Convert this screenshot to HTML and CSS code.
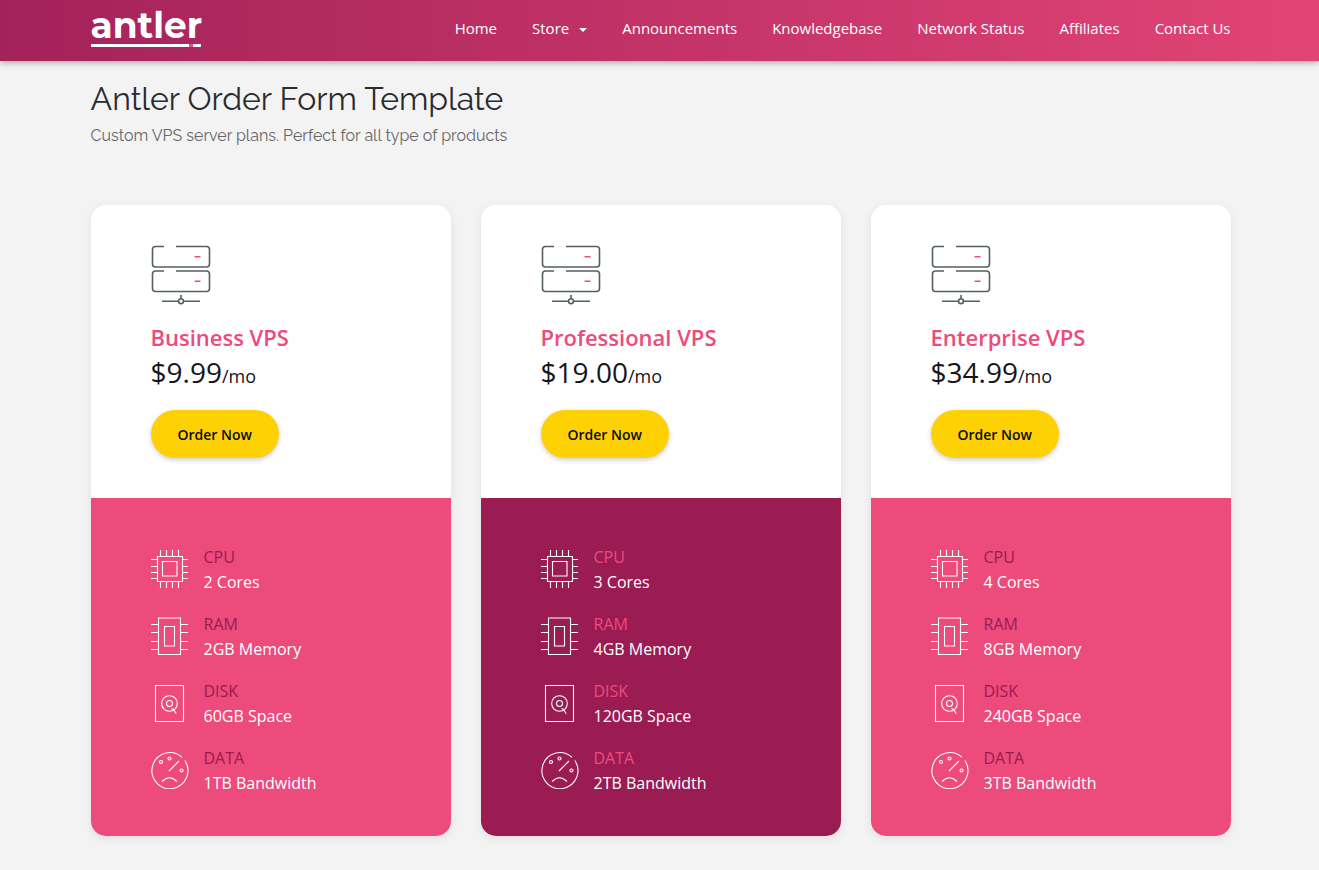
FILE: index.html
```html
<!DOCTYPE html>
<html lang="en">
<head>
<meta charset="utf-8">
<meta name="viewport" content="width=device-width, initial-scale=1">
<title>Antler Order Form Template</title>
<link rel="stylesheet" href="styles.css">
</head>
<body>
<svg class="sprite" aria-hidden="true">
  <symbol id="server" viewBox="0 0 60 60">
    <path class="frame" d="M13 1.500H4.500Q1.500 1.500 1.500 4.500V19Q1.500 22 4.500 22H55.500Q58.500 22 58.500 19V4.500Q58.500 1.500 55.500 1.500H25M13 26H4.500Q1.500 26 1.500 29V43.500Q1.500 46.500 4.500 46.500H55.500Q58.500 46.500 58.500 43.500V29Q58.500 26 55.500 26H25"/>
    <path class="frame" d="M30 50v3.500M11 56.200h16.500M32.500 56.200H49"/>
    <circle class="frame" cx="30" cy="56.200" r="2.400"/>
    <path class="light" d="M43.500 11.700h6M43.500 36.200h6"/>
  </symbol>
  <symbol id="cpu" viewBox="0 0 38 38">
    <path d="M6.500 6.500h25v25h-25zM11.500 11.500h14.500v14.500H11.500zM9.500 0v6.500M15.500 0v6.500M21.500 0v6.500M27.500 0v6.500M9.500 31.500V38M15.500 31.500V38M21.500 31.500V38M27.500 31.500V38M0 9.500h6.500M0 16.500h6.500M0 22.500h6.500M0 28.500h6.500M31.500 9.500H37M31.500 16.500H37M31.500 22.500H37M31.500 28.500H37"/>
  </symbol>
  <symbol id="ram" viewBox="0 0 38 38">
    <path d="M7.500 1h22v36.500h-22zM13.500 9.500h10v19.500h-10zM0 7.500h7.500M0 15.500h7.500M0 24.500h7.500M0 32.500h7.500M29.500 7.500H37M29.500 15.500H37M29.500 24.500H37M29.500 32.500H37"/>
  </symbol>
  <symbol id="disk" viewBox="0 0 38 38">
    <path d="M4.500 1.500h28v36h-28zM20.500 24.500l1.800.700 3 4.500"/>
    <circle cx="18.500" cy="19.500" r="7.800"/>
    <circle cx="18.500" cy="19.500" r="3"/>
  </symbol>
  <symbol id="data" viewBox="0 0 38 38">
    <path d="M33.800 9.500A18 18 0 1 1 31 6.300M18 20L28 10M11 30.500Q18.500 23 26 30.500"/>
    <circle cx="10" cy="11" r="1.500"/>
    <circle cx="18.500" cy="7.500" r="1.500"/>
    <circle cx="30.500" cy="19.500" r="1.500"/>
  </symbol>
</svg>
<header class="header">
  <div class="container bar">
    <a class="logo" href="#">antler</a>
    <nav class="nav">
      <a href="#">Home</a>
      <a href="#">Store<span class="caret"></span></a>
      <a href="#">Announcements</a>
      <a href="#">Knowledgebase</a>
      <a href="#">Network Status</a>
      <a href="#">Affiliates</a>
      <a href="#">Contact Us</a>
    </nav>
  </div>
</header>
<main class="container">
  <h1 class="title">Antler Order Form Template</h1>
  <p class="subtitle">Custom VPS server plans. Perfect for all type of products</p>
  <div class="plans">
    <article class="plan">
      <div class="offer">
        <svg class="server"><use href="#server"/></svg>
        <h2 class="name">Business VPS</h2>
        <p class="price">$9.99<span class="period">/mo</span></p>
        <button class="order" type="button">Order Now</button>
      </div>
      <ul class="specs">
        <li><svg class="icon"><use href="#cpu"/></svg><div><h3>CPU</h3><p>2 Cores</p></div></li>
        <li><svg class="icon"><use href="#ram"/></svg><div><h3>RAM</h3><p>2GB Memory</p></div></li>
        <li><svg class="icon"><use href="#disk"/></svg><div><h3>DISK</h3><p>60GB Space</p></div></li>
        <li><svg class="icon"><use href="#data"/></svg><div><h3>DATA</h3><p>1TB Bandwidth</p></div></li>
      </ul>
    </article>
    <article class="plan featured">
      <div class="offer">
        <svg class="server"><use href="#server"/></svg>
        <h2 class="name">Professional VPS</h2>
        <p class="price">$19.00<span class="period">/mo</span></p>
        <button class="order" type="button">Order Now</button>
      </div>
      <ul class="specs">
        <li><svg class="icon"><use href="#cpu"/></svg><div><h3>CPU</h3><p>3 Cores</p></div></li>
        <li><svg class="icon"><use href="#ram"/></svg><div><h3>RAM</h3><p>4GB Memory</p></div></li>
        <li><svg class="icon"><use href="#disk"/></svg><div><h3>DISK</h3><p>120GB Space</p></div></li>
        <li><svg class="icon"><use href="#data"/></svg><div><h3>DATA</h3><p>2TB Bandwidth</p></div></li>
      </ul>
    </article>
    <article class="plan">
      <div class="offer">
        <svg class="server"><use href="#server"/></svg>
        <h2 class="name">Enterprise VPS</h2>
        <p class="price">$34.99<span class="period">/mo</span></p>
        <button class="order" type="button">Order Now</button>
      </div>
      <ul class="specs">
        <li><svg class="icon"><use href="#cpu"/></svg><div><h3>CPU</h3><p>4 Cores</p></div></li>
        <li><svg class="icon"><use href="#ram"/></svg><div><h3>RAM</h3><p>8GB Memory</p></div></li>
        <li><svg class="icon"><use href="#disk"/></svg><div><h3>DISK</h3><p>240GB Space</p></div></li>
        <li><svg class="icon"><use href="#data"/></svg><div><h3>DATA</h3><p>3TB Bandwidth</p></div></li>
      </ul>
    </article>
  </div>
</main>
</body>
</html>
```
FILE: styles.css
```css
* { box-sizing: border-box; }
body {
  margin: 0;
  background: #f3f3f3;
  color: #15151e;
  font-family: "Open Sans", "Noto Sans", sans-serif;
  font-size: 16px;
}
h1, h2, h3, p, ul { margin: 0; padding: 0; font-weight: 400; }
.sprite { display: none; }
.container {
  max-width: 1172px;
  margin: 0 auto;
  padding: 0 15px 0 17px;
}
.header {
  background: linear-gradient(90deg, #a32259, #e24476);
  box-shadow: 0 2px 6px rgba(0, 0, 0, .3);
}
.bar {
  display: flex;
  justify-content: space-between;
  align-items: flex-start;
  padding-top: 11px;
  padding-bottom: 14px;
}
.logo {
  width: 110px;
  height: 36px;
  border-bottom: 3px solid transparent;
  border-image: linear-gradient(90deg, #fff 87%, #ee4c7c 87%, #ee4c7c 90%, #fff 90%) 3;
  color: #fff;
  font-family: Montserrat, Inter, sans-serif;
  font-size: 36px;
  font-weight: 700;
  line-height: 28px;
  text-decoration: none;
}
.nav { display: flex; gap: 35px; }
.nav a {
  color: #fff;
  font-size: 15px;
  line-height: 34px;
  text-decoration: none;
}
.caret {
  display: inline-block;
  margin-left: 10px;
  border: 4px solid transparent;
  border-top-color: #fff;
  border-bottom: 0;
  vertical-align: middle;
}
.title {
  padding-top: 18px;
  color: #2b2b2f;
  font-family: Raleway, Lato, sans-serif;
  font-size: 32px;
  font-weight: 400;
  line-height: 40px;
}
.subtitle {
  padding-top: 5px;
  color: #66666a;
  font-family: Raleway, Lato, sans-serif;
  font-size: 16px;
  font-weight: 400;
  line-height: 24px;
}
.plans {
  display: grid;
  grid-template-columns: repeat(3, 1fr);
  gap: 30px;
  padding: 57px 0 34px;
}
.plan {
  overflow: hidden;
  border-radius: 15px;
  background: #fff;
  box-shadow: 0 3px 10px rgba(0, 0, 0, .08);
}
.offer { padding: 40px 60px; }
.server { display: block; width: 60px; height: 60px; fill: none; }
.frame { stroke: #545f63; stroke-width: 1.6; }
.light { stroke: #ee4c7c; stroke-width: 1.6; }
.name {
  padding-top: 17px;
  color: #ec4b7b;
  font-size: 22px;
  font-weight: 600;
  line-height: 30px;
}
.price { font-size: 28px; line-height: 40px; }
.period { font-size: 18px; line-height: 1; }
.order {
  display: block;
  height: 48px;
  margin-top: 18px;
  padding: 0 27px;
  border: 0;
  border-radius: 24px;
  background: #fed105;
  box-shadow: 0 2px 5px rgba(0, 0, 0, .2);
  color: #0b0b12;
  font-family: inherit;
  font-size: 14px;
  font-weight: 600;
}
.specs {
  display: grid;
  gap: 17px;
  padding: 47px 60px 40px;
  background: #ec4b7b;
  list-style: none;
}
.specs li { display: flex; align-items: flex-start; gap: 15px; }
.icon {
  width: 38px;
  height: 38px;
  margin-top: 5px;
  fill: none;
  stroke: #fff;
  stroke-width: 1.1;
}
.specs h3 { color: #9b1b53; font-size: 16px; line-height: 25px; }
.specs p { color: #fff; line-height: 25px; }
.featured .specs { background: #9b1b53; }
.featured .specs h3 { color: #ec4b7b; }
```
